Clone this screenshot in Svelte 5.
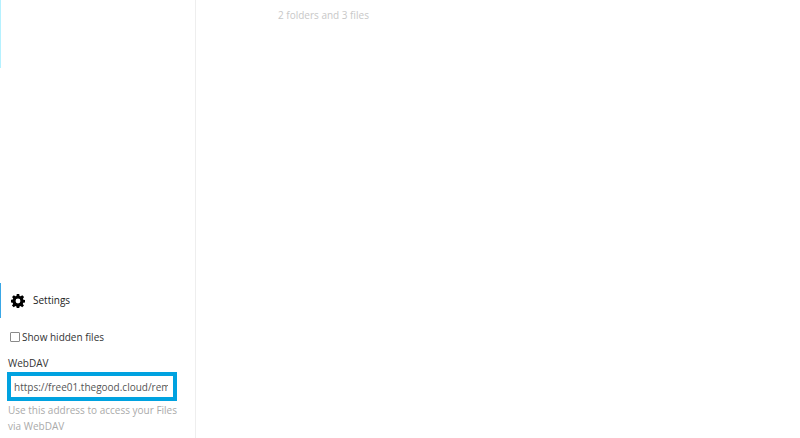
<script lang="ts">
	let showHidden = false;
	const webdav = "https://free01.thegood.cloud/remote.php/dav/files/demo/";
</script>

<div class="page">
	<aside class="sidebar">
		<div class="active-nav"></div>

		<div class="settings">
			<div class="settings-head">
				<svg class="gear" viewBox="0 0 16 16" width="14" height="14" aria-hidden="true">
					<path
						fill="#000"
						fill-rule="evenodd"
						d="M6.6 0h2.8l.4 2.2 1.2.5L12.9 1.4l2 2-1.3 1.9.5 1.2 2 .4v2.800l-2.100.4-.5 1.200 1.300 1.800-2 2-1.900-1.300-1.200.5-.3 2.100H6.600l-.4-2.100-1.200-.5-1.900 1.300-2-2 1.300-1.800-.5-1.200-2-.4V6.700l2.100-.4.5-1.200L1.200 3.400l2-2L5 2.700l1.200-.5zM8 5.200a2.800 2.800 0 1 0 0 5.600 2.800 2.800 0 0 0 0-5.600z"
					/>
				</svg>
				<span>Settings</span>
			</div>

			<div class="settings-body">
				<label class="hidden-files">
					<input type="checkbox" bind:checked={showHidden} />
					<span>Show hidden files</span>
				</label>

				<label class="webdav-label" for="webdav">WebDAV</label>
				<div class="highlight">
					<input id="webdav" type="text" readonly value={webdav} />
				</div>
				<p class="hint">Use this address to access your Files via WebDAV</p>
			</div>
		</div>
	</aside>

	<main class="content">
		<p class="summary">2 folders and 3 files</p>
	</main>
</div>

<style>
	:global(body) {
		margin: 0;
		background: #fff;
	}

	.page {
		display: flex;
		width: 800px;
		height: 438px;
		overflow: hidden;
		font-family: "Open Sans", "Liberation Sans", sans-serif;
		font-size: 10px;
		color: #222;
	}

	.sidebar {
		display: flex;
		flex-direction: column;
		justify-content: space-between;
		flex: 0 0 195px;
		border-right: 1px solid #eee;
	}

	.active-nav {
		width: 1px;
		height: 68px;
		background: #b5f1ff;
	}

	.settings-head {
		display: flex;
		align-items: center;
		gap: 8px;
		height: 35px;
		padding-left: 10px;
		border-left: 1px solid #3aa7e6;
	}

	.settings-head span {
		margin-bottom: 2px;
		font-size: 10px;
		line-height: 1;
	}

	.gear {
		flex: none;
	}

	.settings-body {
		box-sizing: border-box;
		height: 120px;
		padding: 11px 0 0 7px;
	}

	.hidden-files {
		display: flex;
		align-items: center;
		gap: 2px;
		height: 16px;
		padding-left: 3px;
		margin-bottom: 11px;
		font-size: 10px;
		color: #333;
	}

	.hidden-files input {
		width: 10px;
		height: 10px;
		margin: 0;
		appearance: none;
		border: 1px solid #8a8a8a;
		border-radius: 1px;
		background: #fff;
	}

	.webdav-label {
		display: block;
		font-size: 10px;
		line-height: 14px;
		margin: 0 0 2px 1px;
		color: #333;
	}

	.highlight {
		box-sizing: border-box;
		width: 170px;
		height: 29px;
		border: 4px solid #00a2e0;
		background: #fff;
	}

	.highlight input {
		display: block;
		box-sizing: border-box;
		width: 100%;
		height: 100%;
		padding: 0 5px 0 3px;
		border: 0;
		outline: 0;
		background: #fff;
		font: inherit;
		font-size: 10px;
		color: #555;
	}

	.hint {
		width: 178px;
		margin: 1px 0 0 1px;
		font-size: 10px;
		line-height: 16px;
		color: #aaa;
	}

	.content {
		flex: 1;
	}

	.summary {
		margin: 8px 0 0 82px;
		font-size: 10px;
		line-height: 14px;
		color: #c8c8c8;
	}
</style>
